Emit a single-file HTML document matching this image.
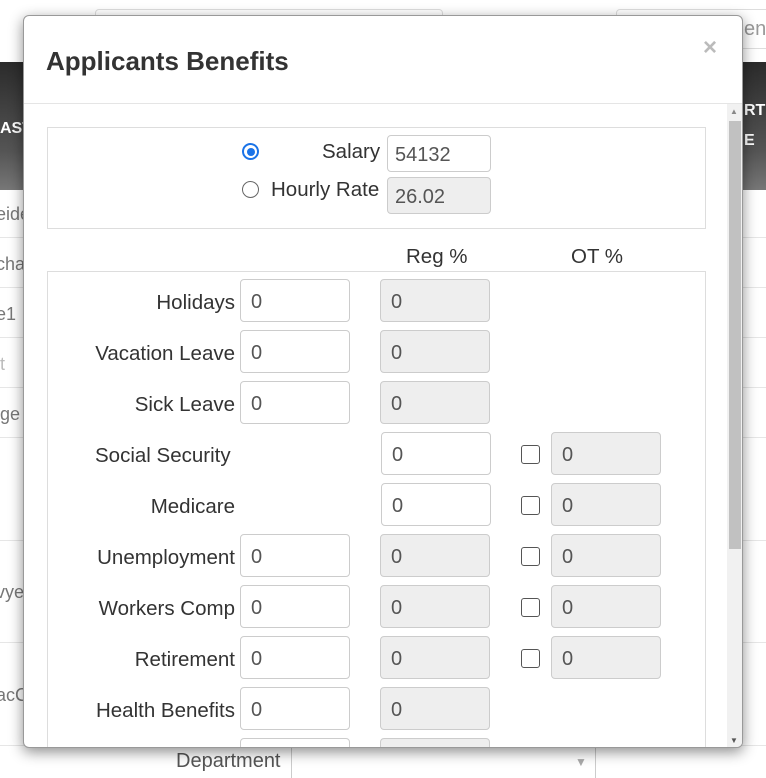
<!DOCTYPE html>
<html><head><style>
*{box-sizing:border-box;margin:0;padding:0}
body{width:766px;height:771px;overflow:hidden;background:#fff;font-family:"Liberation Sans",sans-serif;position:relative;color:#333}
.a{position:absolute}
.band{background:linear-gradient(#2b2b2b,#555 70%,#777);}
.rowline{position:absolute;left:0;width:766px;height:1px;background:#e6e6e6}
.bgtxt{position:absolute;font-size:18px;color:#777}
.modal{position:absolute;left:23px;top:15px;width:720px;height:733px;background:#fff;border:1px solid #999;border-radius:6px;box-shadow:0 4px 14px rgba(0,0,0,.45);overflow:hidden}
.inp{position:absolute;width:110px;height:43px;border:1px solid #ccc;border-radius:4px;background:#fff;font-size:20px;color:#555;padding:11px 0 0 10px}
.dis{background:#eee}
.lbl{position:absolute;font-size:20.5px;color:#333;text-align:right;width:240px}
.cb{position:absolute;width:19px;height:19px;border:1.5px solid #555;border-radius:3px;background:#fff}
</style></head><body>
<div class="a" style="left:95px;top:9px;width:348px;height:40px;border:1px solid #ddd;border-radius:4px"></div>
<div class="a" style="left:616px;top:9px;width:160px;height:40px;border:1px solid #ddd;border-radius:4px"></div>
<div class="bgtxt" style="left:744px;top:18px;font-size:20px;color:#999">ent</div>
<div class="a band" style="left:0;top:62px;width:766px;height:128px"></div>
<div class="a" style="left:0;top:120px;color:#fff;font-weight:bold;font-size:16px">AST</div>
<div class="a" style="left:744px;top:102px;color:#fff;font-weight:bold;font-size:16px">RTI</div>
<div class="a" style="left:744px;top:132px;color:#fff;font-weight:bold;font-size:16px">E</div>
<div class="rowline" style="top:237px"></div><div class="rowline" style="top:287px"></div>
<div class="rowline" style="top:337px"></div><div class="rowline" style="top:387px"></div>
<div class="rowline" style="top:437px"></div><div class="rowline" style="top:540px"></div>
<div class="rowline" style="top:642px"></div><div class="rowline" style="top:745px"></div>
<div class="bgtxt" style="left:-4px;top:204px">eide</div>
<div class="bgtxt" style="left:-4px;top:254px">cha</div>
<div class="bgtxt" style="left:-4px;top:304px">e1</div>
<div class="bgtxt" style="left:0;top:354px;color:#bbb">t</div>
<div class="bgtxt" style="left:-4px;top:404px">ige</div>
<div class="bgtxt" style="left:-4px;top:582px">vye</div>
<div class="bgtxt" style="left:-4px;top:685px">acC</div>
<div class="bgtxt" style="left:176px;top:750px;font-size:20px;color:#555">Department</div>
<div class="a" style="left:291px;top:748px;width:305px;height:30px;border-left:1px solid #ccc;border-right:1px solid #ccc"></div>
<div class="a" style="left:575px;top:755px;color:#aaa;font-size:12px">▼</div>

<div class="modal">
  <div class="a" style="left:22px;top:30px;font-size:26px;font-weight:bold;color:#333">Applicants Benefits</div>
  <div class="a" style="left:679px;top:18px;font-size:24px;font-weight:bold;color:#bbb">×</div>
  <div class="a" style="left:0;top:87px;width:720px;height:1px;background:#e5e5e5"></div>
  <div class="a" style="left:703px;top:88px;width:16px;height:645px;background:#f1f1f1"></div>
  <div class="a" style="left:705px;top:105px;width:12px;height:428px;background:#c1c1c1"></div>
  <div class="a" style="left:706px;top:91px;font-size:8px;color:#888">▲</div>
  <div class="a" style="left:706px;top:720px;font-size:8px;color:#555">▼</div>

  <div class="a" style="left:23px;top:111px;width:659px;height:102px;border:1px solid #ddd"></div>
  <div class="a" style="left:218px;top:127px;width:17px;height:17px;border-radius:50%;border:2px solid #1a73e8;background:#fff"><div class="a" style="left:2.5px;top:2.5px;width:8px;height:8px;border-radius:50%;background:#1a73e8"></div></div>
  <div class="a" style="left:218px;top:165px;width:17px;height:17px;border-radius:50%;border:1.5px solid #666"></div>
  <div class="a" style="left:298px;top:124px;font-size:20.5px">Salary</div>
  <div class="a" style="left:247px;top:162px;font-size:20.5px">Hourly Rate</div>
  <div class="inp" style="left:363px;top:119px;width:104px;height:37px;padding:8px 0 0 7px">54132</div>
  <div class="inp dis" style="left:363px;top:161px;width:104px;height:37px;padding:8px 0 0 7px">26.02</div>

  <div class="a" style="left:382px;top:229px;font-size:20.5px">Reg %</div>
  <div class="a" style="left:547px;top:229px;font-size:20.5px">OT %</div>
  <div class="a" style="left:23px;top:255px;width:659px;height:500px;border:1px solid #ddd"></div>

  <div class="lbl" style="left:-29px;top:275px">Holidays</div>
  <div class="inp" style="left:216px;top:263px">0</div><div class="inp dis" style="left:356px;top:263px">0</div>
  <div class="lbl" style="left:-29px;top:326px">Vacation Leave</div>
  <div class="inp" style="left:216px;top:314px">0</div><div class="inp dis" style="left:356px;top:314px">0</div>
  <div class="lbl" style="left:-29px;top:377px">Sick Leave</div>
  <div class="inp" style="left:216px;top:365px">0</div><div class="inp dis" style="left:356px;top:365px">0</div>
  <div class="a" style="left:71px;top:428px;font-size:20.5px">Social Security</div>
  <div class="inp" style="left:357px;top:416px">0</div>
  <div class="cb" style="left:497px;top:429px"></div><div class="inp dis" style="left:527px;top:416px">0</div>
  <div class="lbl" style="left:-29px;top:479px">Medicare</div>
  <div class="inp" style="left:357px;top:467px">0</div>
  <div class="cb" style="left:497px;top:480px"></div><div class="inp dis" style="left:527px;top:467px">0</div>
  <div class="lbl" style="left:-29px;top:530px">Unemployment</div>
  <div class="inp" style="left:216px;top:518px">0</div><div class="inp dis" style="left:356px;top:518px">0</div>
  <div class="cb" style="left:497px;top:531px"></div><div class="inp dis" style="left:527px;top:518px">0</div>
  <div class="lbl" style="left:-29px;top:581px">Workers Comp</div>
  <div class="inp" style="left:216px;top:569px">0</div><div class="inp dis" style="left:356px;top:569px">0</div>
  <div class="cb" style="left:497px;top:582px"></div><div class="inp dis" style="left:527px;top:569px">0</div>
  <div class="lbl" style="left:-29px;top:632px">Retirement</div>
  <div class="inp" style="left:216px;top:620px">0</div><div class="inp dis" style="left:356px;top:620px">0</div>
  <div class="cb" style="left:497px;top:633px"></div><div class="inp dis" style="left:527px;top:620px">0</div>
  <div class="lbl" style="left:-29px;top:683px">Health Benefits</div>
  <div class="inp" style="left:216px;top:671px">0</div><div class="inp dis" style="left:356px;top:671px">0</div>
  <div class="inp" style="left:216px;top:722px"></div><div class="inp dis" style="left:356px;top:722px"></div>
</div>
</body></html>
